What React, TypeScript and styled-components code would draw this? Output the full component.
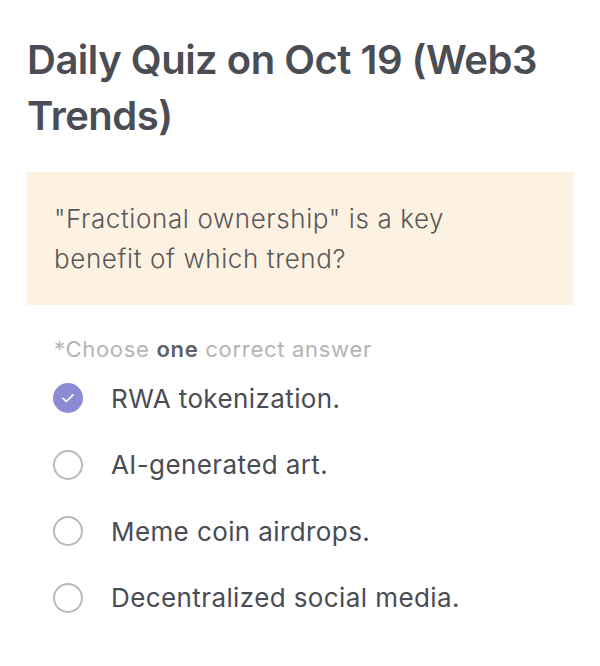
import React, { useState } from "react";
import styled, { createGlobalStyle } from "styled-components";

const GlobalStyle = createGlobalStyle`
  body {
    margin: 0;
    background: #ffffff;
    font-family: Inter, "Noto Sans", sans-serif;
  }
`;

const Page = styled.div`
  padding: 32px 27px 0;
`;

const Title = styled.h1`
  margin: 0;
  font-size: 40px;
  font-weight: 600;
  line-height: 56px;
  letter-spacing: -0.5px;
  color: #4b4d55;
`;

const QuestionBox = styled.div`
  margin-top: 28px;
  background: #fdf2e1;
  padding: 27px 27px 26px;
  font-size: 26px;
  line-height: 40px;
  color: #58585c;
  letter-spacing: 0.6px;
  font-weight: 300;

  span {
    display: block;
    max-width: 460px;
  }
`;

const Hint = styled.p`
  margin: 30px 0 0 27px;
  font-size: 22px;
  line-height: 28px;
  color: #b4b4b6;
  letter-spacing: 0.7px;

  strong {
    color: #606066;
    font-weight: 600;
  }
`;

const Options = styled.ul`
  list-style: none;
  margin: 2px 0 0;
  padding: 0 0 0 26px;
`;

const Option = styled.li`
  display: flex;
  align-items: center;
  gap: 28px;
  height: 66.5px;
  font-size: 26px;
  letter-spacing: 0.4px;
  color: #4a4c54;
  cursor: pointer;
`;

const Radio = styled.span<{ $checked: boolean }>`
  box-sizing: border-box;
  width: 30px;
  height: 30px;
  border-radius: 50%;
  flex-shrink: 0;
  display: flex;
  align-items: center;
  justify-content: center;
  border: ${(p) => (p.$checked ? "none" : "2px solid #b9b9bb")};
  background: ${(p) => (p.$checked ? "#8b8cd4" : "#ffffff")};
`;

const answers = [
  "RWA tokenization.",
  "AI-generated art.",
  "Meme coin airdrops.",
  "Decentralized social media.",
];

export default function App() {
  const [picked, setPicked] = useState(0);

  return (
    <Page>
      <GlobalStyle />
      <Title>Daily Quiz on Oct 19 (Web3 Trends)</Title>
      <QuestionBox>
        <span>"Fractional ownership" is a key benefit of which trend?</span>
      </QuestionBox>
      <Hint>
        *Choose <strong>one</strong> correct answer
      </Hint>
      <Options>
        {answers.map((a, i) => (
          <Option key={a} onClick={() => setPicked(i)}>
            <Radio $checked={picked === i}>
              {picked === i && (
                <svg width="16" height="16" viewBox="0 0 16 16" fill="none">
                  <path
                    d="M3 8.3l3.3 3.2L13 4.8"
                    stroke="#ffffff"
                    strokeWidth="1.7"
                    strokeLinecap="round"
                    strokeLinejoin="round"
                  />
                </svg>
              )}
            </Radio>
            {a}
          </Option>
        ))}
      </Options>
    </Page>
  );
}
